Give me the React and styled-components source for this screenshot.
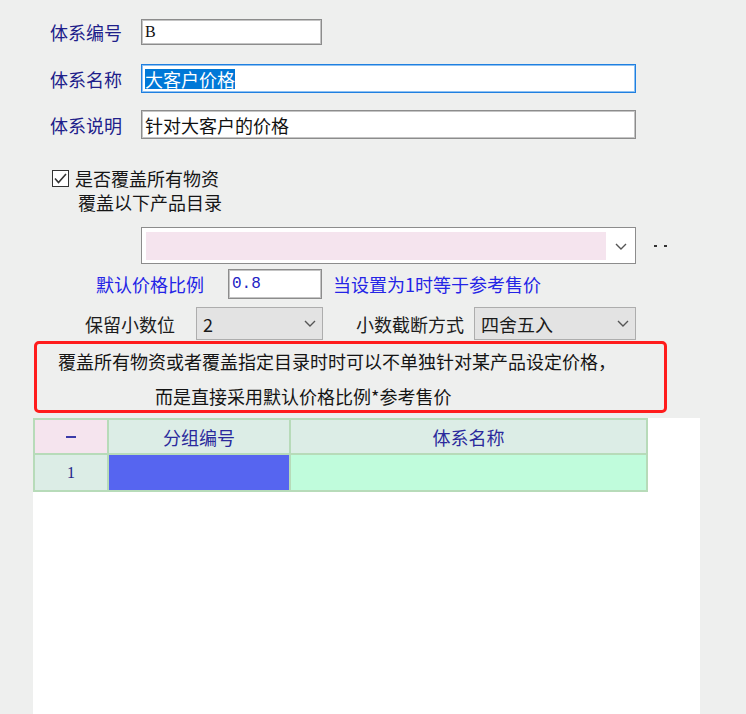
import React from 'react';
import styled, { createGlobalStyle } from 'styled-components';

const GlobalStyle = createGlobalStyle`
  html, body { margin: 0; padding: 0; background: #eeefee; }
  body { font-family: "Noto Sans CJK SC", "Noto Sans", sans-serif; }
  * { box-sizing: border-box; }
`;

const Page = styled.div`
  min-height: 100vh;
  display: flex;
  flex-direction: column;
  background: #eeefee;
`;

const Form = styled.div`
  display: flex;
  flex-direction: column;
  padding: 19px 0 0 50px;
`;

const Row = styled.div`
  display: flex;
  align-items: center;
  height: ${p => p.$h}px;
  margin-top: ${p => p.$mt || 0}px;
  padding-left: ${p => p.$pl || 0}px;
`;

const Label = styled.div`
  flex: none;
  width: ${p => (p.$w ? `${p.$w}px` : 'auto')};
  padding-left: ${p => p.$pl || 0}px;
  margin-left: ${p => p.$ml || 0}px;
  font-size: 18px;
  line-height: 22px;
  white-space: nowrap;
  color: ${p => p.$color || '#20208a'};
`;

const TextBox = styled.div`
  flex: none;
  width: ${p => p.$w}px;
  height: 100%;
  display: flex;
  align-items: center;
  padding-left: 3px;
  background: #fff;
  border: 1px solid ${p => (p.$focus ? '#1f7fe0' : '#8c8c8c')};
  box-shadow: inset 0 0 0 1px ${p => (p.$focus ? '#8ec1f2' : '#c4c4c4')};
  font-size: 18px;
  color: #111;
  white-space: nowrap;
`;

const SerifText = styled.span`
  font-family: "Liberation Serif", serif;
  font-size: 16px;
  color: #111;
`;

const MonoText = styled.span`
  font-family: "Liberation Mono", monospace;
  font-size: 16px;
  color: #2323c4;
`;

const Selected = styled.span`
  background: #0078d7;
  color: #fff;
  line-height: 20px;
  height: 20px;
  display: inline-block;
`;

const CheckBox = styled.span`
  flex: none;
  width: 17px;
  height: 17px;
  margin-left: 2px;
  margin-right: 6px;
  border: 1px solid #333;
  background: #fff;
  display: flex;
  align-items: center;
  justify-content: center;
`;

const Combo = styled.div`
  flex: none;
  margin-left: 91px;
  width: 495px;
  height: 100%;
  display: flex;
  align-items: stretch;
  background: #fff;
  border: 1px solid #8c8c8c;
  padding: 4px 0 3px 4px;
`;

const ComboFill = styled.div`
  flex: 1;
  background: #f5e4ee;
`;

const ComboArrow = styled.div`
  width: 29px;
  display: flex;
  align-items: center;
  justify-content: center;
`;

const Ellipsis = styled.div`
  margin-left: 18px;
  display: flex;
  gap: 7px;
  align-items: center;
`;

const Dash = styled.span`
  width: 3px;
  height: 2px;
  background: #333;
`;

const Hint = styled.div`
  margin-left: 11px;
  font-size: 18px;
  color: #2424e6;
  white-space: nowrap;
`;

const Select = styled.div`
  flex: none;
  width: ${p => p.$w}px;
  height: 100%;
  display: flex;
  align-items: center;
  justify-content: space-between;
  padding: 0 6px 0 6px;
  background: #e3e3e3;
  border: 1px solid #adadad;
  font-size: 18px;
  color: #1a1a1a;
`;

const Notice = styled.div`
  margin: 1px 0 0 34px;
  width: 633px;
  height: 72px;
  border: 3px solid #ff1c1c;
  border-radius: 5px;
  font-size: 18px;
  line-height: 35px;
  color: #141414;
  white-space: nowrap;
`;

const NoticeLine = styled.div`
  padding-left: ${p => p.$pl}px;
`;

const Panel = styled.div`
  flex: 1;
  margin: 5px 0 0 33px;
  width: 667px;
  background: #fff;
`;

const Grid = styled.div`
  width: 615px;
  display: grid;
  grid-template-columns: 72px 180px 355px;
  grid-template-rows: 33px 35px;
  gap: 2px;
  padding: 2px;
  background: #b7dbb9;
`;

const Cell = styled.div`
  background: ${p => p.$bg};
  display: flex;
  align-items: center;
  justify-content: center;
  font-size: 18px;
  color: #2a2a9c;
`;

const HeadDash = styled.span`
  width: 10px;
  height: 2px;
  background: #3a3aa8;
`;

const RowNum = styled.span`
  font-family: "Liberation Serif", serif;
  font-size: 16px;
  color: #23238a;
`;

const Chevron = () => (
  <svg width="12" height="7" viewBox="0 0 12 7">
    <polyline points="1,1 6,6 11,1" fill="none" stroke="#555" strokeWidth="1.4" />
  </svg>
);

export default function App() {
  return (
    <>
      <GlobalStyle />
      <Page>
        <Form>
          <Row $h={26}>
            <Label $w={91}>体系编号</Label>
            <TextBox $w={181}><SerifText>B</SerifText></TextBox>
          </Row>
          <Row $h={29} $mt={19}>
            <Label $w={91}>体系名称</Label>
            <TextBox $w={495} $focus><Selected>大客户价格</Selected></TextBox>
          </Row>
          <Row $h={29} $mt={17}>
            <Label $w={91}>体系说明</Label>
            <TextBox $w={495}>针对大客户的价格</TextBox>
          </Row>
          <Row $h={20} $mt={29}>
            <CheckBox>
              <svg width="13" height="11" viewBox="0 0 13 11">
                <polyline points="1,5.5 4.5,9.5 12,1" fill="none" stroke="#333" strokeWidth="1.6" />
              </svg>
            </CheckBox>
            <Label $color="#161616">是否覆盖所有物资</Label>
          </Row>
          <Row $h={22} $mt={3}>
            <Label $pl={28} $color="#161616">覆盖以下产品目录</Label>
          </Row>
          <Row $h={37} $mt={14}>
            <Combo>
              <ComboFill />
              <ComboArrow><Chevron /></ComboArrow>
            </Combo>
            <Ellipsis><Dash /><Dash /></Ellipsis>
          </Row>
          <Row $h={30} $mt={5}>
            <Label $w={178} $pl={46} $color="#2424e6">默认价格比例</Label>
            <TextBox $w={94}><MonoText>0.8</MonoText></TextBox>
            <Hint>当设置为1时等于参考售价</Hint>
          </Row>
          <Row $h={33} $mt={8}>
            <Label $w={146} $pl={35} $color="#1c1c1c">保留小数位</Label>
            <Select $w={127}><span>2</span><Chevron /></Select>
            <Label $w={118} $ml={33} $color="#1c1c1c">小数截断方式</Label>
            <Select $w={162}><span>四舍五入</span><Chevron /></Select>
          </Row>
        </Form>
        <Notice>
          <NoticeLine $pl={21}>覆盖所有物资或者覆盖指定目录时时可以不单独针对某产品设定价格，</NoticeLine>
          <NoticeLine $pl={118}>而是直接采用默认价格比例*参考售价</NoticeLine>
        </Notice>
        <Panel>
          <Grid>
            <Cell $bg="#f5e4ee"><HeadDash /></Cell>
            <Cell $bg="#dcede6">分组编号</Cell>
            <Cell $bg="#dcede6">体系名称</Cell>
            <Cell $bg="#dcede6"><RowNum>1</RowNum></Cell>
            <Cell $bg="#5665f0" />
            <Cell $bg="#c0fcdc" />
          </Grid>
        </Panel>
      </Page>
    </>
  );
}
